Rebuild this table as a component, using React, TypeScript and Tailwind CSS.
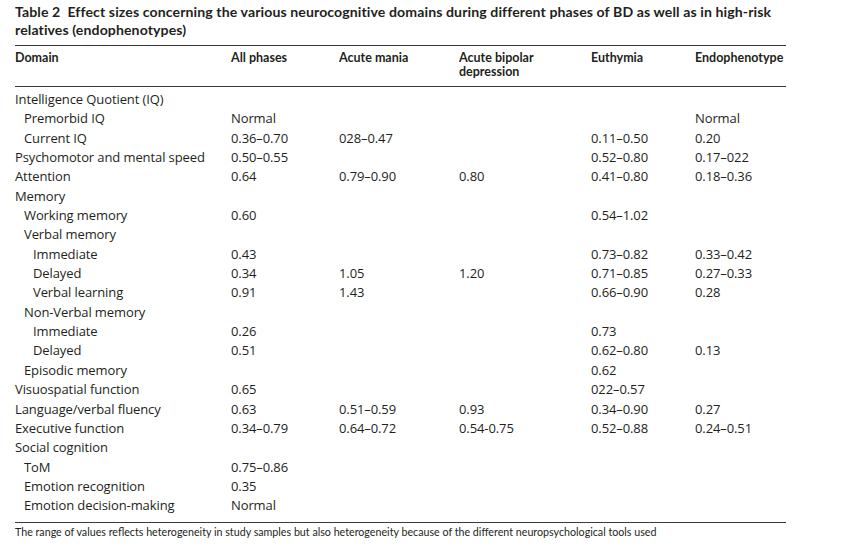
const rows: { label: string; level: number; v: string[] }[] = [
  { label: 'Intelligence Quotient (IQ)', level: 0, v: ['', '', '', '', ''] },
  { label: 'Premorbid IQ', level: 1, v: ['Normal', '', '', '', 'Normal'] },
  { label: 'Current IQ', level: 1, v: ['0.36–0.70', '028–0.47', '', '0.11–0.50', '0.20'] },
  { label: 'Psychomotor and mental speed', level: 0, v: ['0.50–0.55', '', '', '0.52–0.80', '0.17–022'] },
  { label: 'Attention', level: 0, v: ['0.64', '0.79–0.90', '0.80', '0.41–0.80', '0.18–0.36'] },
  { label: 'Memory', level: 0, v: ['', '', '', '', ''] },
  { label: 'Working memory', level: 1, v: ['0.60', '', '', '0.54–1.02', ''] },
  { label: 'Verbal memory', level: 1, v: ['', '', '', '', ''] },
  { label: 'Immediate', level: 2, v: ['0.43', '', '', '0.73–0.82', '0.33–0.42'] },
  { label: 'Delayed', level: 2, v: ['0.34', '1.05', '1.20', '0.71–0.85', '0.27–0.33'] },
  { label: 'Verbal learning', level: 2, v: ['0.91', '1.43', '', '0.66–0.90', '0.28'] },
  { label: 'Non-Verbal memory', level: 1, v: ['', '', '', '', ''] },
  { label: 'Immediate', level: 2, v: ['0.26', '', '', '0.73', ''] },
  { label: 'Delayed', level: 2, v: ['0.51', '', '', '0.62–0.80', '0.13'] },
  { label: 'Episodic memory', level: 1, v: ['', '', '', '0.62', ''] },
  { label: 'Visuospatial function', level: 0, v: ['0.65', '', '', '022–0.57', ''] },
  { label: 'Language/verbal fluency', level: 0, v: ['0.63', '0.51–0.59', '0.93', '0.34–0.90', '0.27'] },
  { label: 'Executive function', level: 0, v: ['0.34–0.79', '0.64–0.72', '0.54-0.75', '0.52–0.88', '0.24–0.51'] },
  { label: 'Social cognition', level: 0, v: ['', '', '', '', ''] },
  { label: 'ToM', level: 1, v: ['0.75–0.86', '', '', '', ''] },
  { label: 'Emotion recognition', level: 1, v: ['0.35', '', '', '', ''] },
  { label: 'Emotion decision-making', level: 1, v: ['Normal', '', '', '', ''] },
]

const indent = ['pl-0', 'pl-[9px]', 'pl-[18px]']
const grid = 'grid grid-cols-[216px_108px_120px_132px_104px_91px]'

export default function App() {
  return (
    <div className="w-[841px] h-[559px] bg-white text-[#231f20] font-['Open_Sans',sans-serif] overflow-hidden">
      <div className="pl-[15px] w-[788px]">
        <h1 className="pt-[3px] text-[14.1px] leading-[18px] font-bold font-['Lato',sans-serif] tracking-[0.1px]">
          Table 2&nbsp; Effect sizes concerning the various neurocognitive domains during different phases of BD as well as in high-risk relatives (endophenotypes)
        </h1>
        <div className={`${grid} w-[771px] mt-[6px] border-t border-b border-[#3a3a3a] pt-[5px] h-[42px] text-[12.5px] leading-[14px] font-bold font-['Lato',sans-serif]`}>
          <div>Domain</div>
          <div>All phases</div>
          <div>Acute mania</div>
          <div>Acute bipolar<br />depression</div>
          <div>Euthymia</div>
          <div>Endophenotype</div>
        </div>
        <div className="w-[771px] pt-[3px] pb-[6px] border-b border-[#3a3a3a] text-[13px] tracking-[-0.1px]">
          {rows.map((r, i) => (
            <div key={i} className={`${grid} h-[19.35px] items-center`}>
              <div className={indent[r.level]}>{r.label}</div>
              {r.v.map((c, j) => (
                <div key={j}>{c}</div>
              ))}
            </div>
          ))}
        </div>
        <p className="pt-[2px] text-[10.7px] leading-[14px] font-['Lato',sans-serif]">
          The range of values reflects heterogeneity in study samples but also heterogeneity because of the different neuropsychological tools used
        </p>
      </div>
    </div>
  )
}
